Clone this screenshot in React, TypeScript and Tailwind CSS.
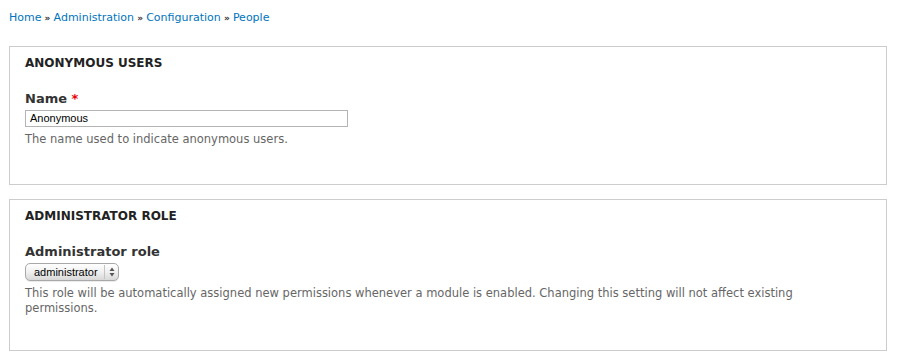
import React from "react";

const font = { fontFamily: '"DejaVu Sans", Verdana, sans-serif' };

export default function App() {
  return (
    <div className="w-[905px] h-[358px] bg-white overflow-hidden text-[#333]" style={font}>
      <div className="px-[9px] pt-[10px] h-[46px] text-[11px] leading-[16px]">
        <a className="text-[#0074bd]">Home</a>
        <span className="text-[#333] text-[9px] font-bold"> » </span>
        <a className="text-[#0074bd]">Administration</a>
        <span className="text-[#333] text-[9px] font-bold"> » </span>
        <a className="text-[#0074bd]">Configuration</a>
        <span className="text-[#333] text-[9px] font-bold"> » </span>
        <a className="text-[#0074bd]">People</a>
      </div>

      <div className="ml-[9px] w-[878px] h-[139px] border border-[#ccc] px-[15px] pt-[8px]">
        <div className="text-[12px] font-bold leading-[16px] text-[#222]">ANONYMOUS USERS</div>
        <div className="mt-[19px] text-[13px] font-bold leading-[17px] text-[#333]">
          Name <span className="text-[#e00]">*</span>
        </div>
        <div
          className="mt-[3px] w-[323px] h-[17px] border border-[#b4b4b4] px-[4px] text-[11px] leading-[15px] text-black"
          style={{ fontFamily: '"Liberation Sans", Arial, sans-serif' }}
        >
          Anonymous
        </div>
        <div className="mt-[5px] text-[11.5px] leading-[15px] text-[#666]">The name used to indicate anonymous users.</div>
      </div>

      <div className="ml-[9px] mt-[14px] w-[878px] h-[152px] border border-[#ccc] px-[15px] pt-[8px]">
        <div className="text-[12px] font-bold leading-[16px] text-[#222]">ADMINISTRATOR ROLE</div>
        <div className="mt-[19px] text-[13px] font-bold leading-[17px] text-[#333]">Administrator role</div>
        <div
          className="mt-[3px] w-[94px] h-[18px] rounded-[5px] border border-[#a8a8a8] bg-gradient-to-b from-white via-[#f0f0f0] to-[#d8d8d8] flex items-center text-[11px] text-black shadow-[0_1px_0_rgba(0,0,0,0.08)]"
          style={{ fontFamily: '"Liberation Sans", Arial, sans-serif' }}
        >
          <span className="pl-[8px] flex-1 leading-[16px]">administrator</span>
          <span className="w-px h-[14px] bg-[#c4c4c4]" />
          <span className="w-[13px] flex items-center justify-center">
            <svg width="6" height="10" viewBox="0 0 6 10">
              <path d="M3 0.5 L5.5 4 H0.5 Z" fill="#555" />
              <path d="M3 9.5 L5.5 6 H0.5 Z" fill="#555" />
            </svg>
          </span>
        </div>
        <div className="mt-[5px] w-[830px] text-[11.5px] leading-[15px] text-[#666]">
          This role will be automatically assigned new permissions whenever a module is enabled. Changing this setting will not affect existing permissions.
        </div>
      </div>
    </div>
  );
}
